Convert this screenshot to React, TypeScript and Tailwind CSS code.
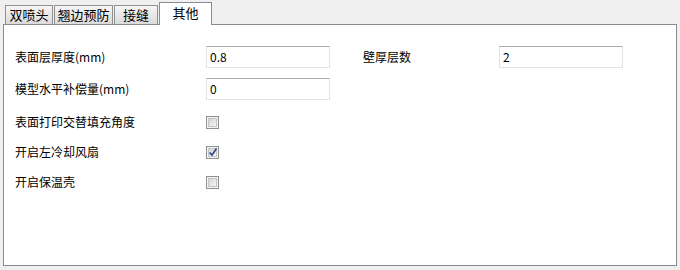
import React from "react";

const font = { fontFamily: '"Noto Sans CJK SC", "Liberation Sans", sans-serif' };

function Tab({ label, width, active }: { label: string; width: string; active?: boolean }) {
  if (active) {
    return (
      <div
        className={`${width} relative z-10 -mb-px ml-px flex h-[23px] items-start justify-center border border-b-0 border-[#898c95] bg-white pt-[2px] text-[13px] leading-[16px] text-black`}
      >
        {label}
      </div>
    );
  }
  return (
    <div
      className={`${width} ml-px flex h-[19px] items-center justify-center border border-b-0 border-[#8e8f8f] bg-linear-to-b from-[#f6f6f6] to-[#dadada] text-[13px] leading-[16px] text-black`}
    >
      {label}
    </div>
  );
}

function TextBox({ value }: { value: string }) {
  return (
    <div className="flex h-[22px] w-[124px] items-center border border-[#e2e3ea] border-t-[#abadb3] bg-white pl-[3px] text-[12px] text-black">
      {value}
    </div>
  );
}

function CheckBox({ checked }: { checked?: boolean }) {
  return (
    <div className="flex h-[13px] w-[13px] items-center justify-center border border-[#8e8f8f] bg-[#f4f4f4]">
      <div className="relative h-[9px] w-[9px] border border-[#c4c4c4] bg-linear-to-br from-[#d4d4d4] to-[#f6f6f6]">
        {checked && (
          <svg className="absolute -left-px -top-[2px]" width="10" height="10" viewBox="0 0 10 10">
            <path d="M1.5 5.5 L4 8 L8.5 1.5" fill="none" stroke="#2c3f8a" strokeWidth="1.6" />
          </svg>
        )}
      </div>
    </div>
  );
}

export default function App() {
  return (
    <div className="h-[270px] w-[680px] bg-[#f0f0f0]" style={font}>
      <div className="flex h-[24px] items-end pl-[4px]">
        <Tab label="双喷头" width="w-[48px]" />
        <Tab label="翘边预防" width="w-[59px]" />
        <Tab label="接缝" width="w-[44px]" />
        <Tab label="其他" width="w-[53px]" active />
      </div>
      <div className="ml-[3px] h-[242px] w-[674px] border border-[#898c95] bg-white">
        <div className="flex flex-col pl-[11px] pt-[21px] text-[12px] text-black">
          <div className="flex h-[22px] items-center">
            <span className="w-[191px]">表面层厚度(mm)</span>
            <TextBox value="0.8" />
            <span className="ml-[33px] w-[136px]">壁厚层数</span>
            <TextBox value="2" />
          </div>
          <div className="mt-[10px] flex h-[22px] items-center">
            <span className="w-[191px]">模型水平补偿量(mm)</span>
            <TextBox value="0" />
          </div>
          <div className="mt-[7px] flex h-[30px] items-center">
            <span className="w-[191px]">表面打印交替填充角度</span>
            <CheckBox />
          </div>
          <div className="flex h-[30px] items-center">
            <span className="w-[191px]">开启左冷却风扇</span>
            <CheckBox checked />
          </div>
          <div className="flex h-[30px] items-center">
            <span className="w-[191px]">开启保温壳</span>
            <CheckBox />
          </div>
        </div>
      </div>
    </div>
  );
}
